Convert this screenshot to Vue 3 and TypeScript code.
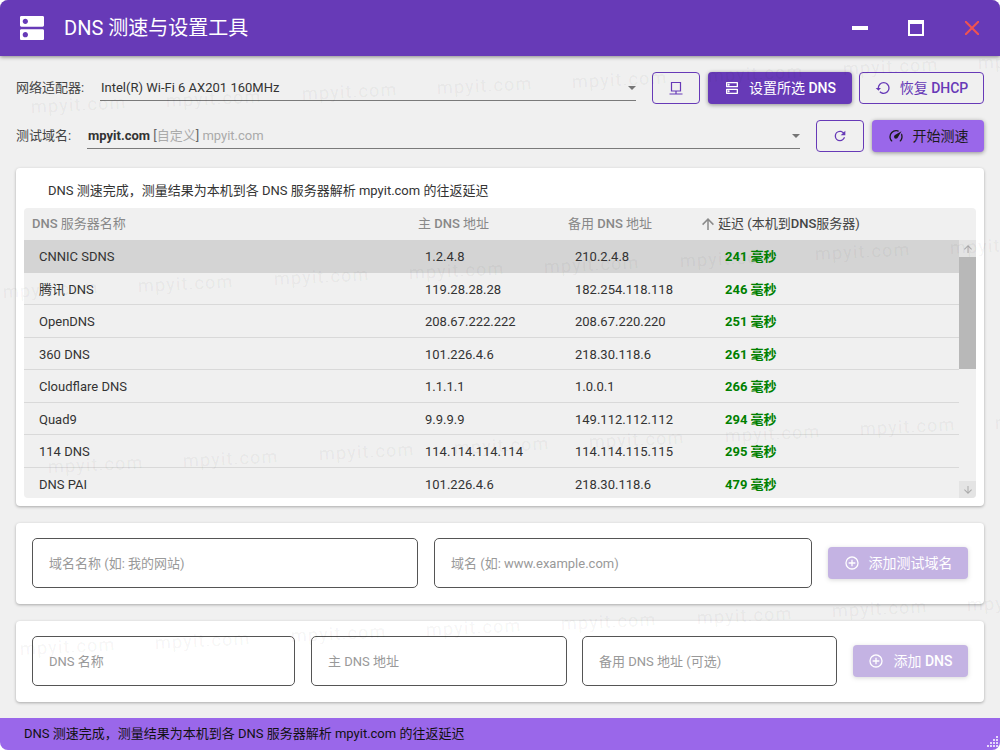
<script setup lang="ts">
type Server = {
    name: string,
    primary: string,
    backup: string,
    latency: number,
}

const servers: Server[] = [
    { name: 'CNNIC SDNS', primary: '1.2.4.8', backup: '210.2.4.8', latency: 241 },
    { name: '腾讯 DNS', primary: '119.28.28.28', backup: '182.254.118.118', latency: 246 },
    { name: 'OpenDNS', primary: '208.67.222.222', backup: '208.67.220.220', latency: 251 },
    { name: '360 DNS', primary: '101.226.4.6', backup: '218.30.118.6', latency: 261 },
    { name: 'Cloudflare DNS', primary: '1.1.1.1', backup: '1.0.0.1', latency: 266 },
    { name: 'Quad9', primary: '9.9.9.9', backup: '149.112.112.112', latency: 294 },
    { name: '114 DNS', primary: '114.114.114.114', backup: '114.114.115.115', latency: 295 },
    { name: 'DNS PAI', primary: '101.226.4.6', backup: '218.30.118.6', latency: 479 },
]

const message = 'DNS 测速完成，测量结果为本机到各 DNS 服务器解析 mpyit.com 的往返延迟'

// watermark text repeats in slanted rows across the whole window
const watermarks: { x: number, y: number }[] = []
for (const [startX, startY] of [[31, 107], [3, 292], [48, 467], [20, 649]]) {
    for (let i = 0; i < 8; i++) {
        watermarks.push({ x: startX + i * 135.3, y: startY - i * 6.3 })
    }
}
</script>

<template>
    <div class="window">
        <header class="titlebar">
            <svg class="logo" viewBox="0 0 24 24"><path d="M20 13H4c-.55 0-1 .45-1 1v6c0 .55.45 1 1 1h16c.55 0 1-.45 1-1v-6c0-.55-.45-1-1-1zM7 19c-1.1 0-2-.9-2-2s.9-2 2-2 2 .9 2 2-.9 2-2 2zM20 3H4c-.55 0-1 .45-1 1v6c0 .55.45 1 1 1h16c.55 0 1-.45 1-1V4c0-.55-.45-1-1-1zM7 9c-1.1 0-2-.9-2-2s.9-2 2-2 2 .9 2 2-.9 2-2 2z" /></svg>
            <h1>DNS 测速与设置工具</h1>
            <div class="controls">
                <svg viewBox="0 0 24 24"><path d="M20,14H4V10H20" /></svg>
                <svg viewBox="0 0 24 24"><path d="M4,4H20V20H4V4M6,8V18H18V8H6Z" /></svg>
                <svg class="close" viewBox="0 0 24 24"><path d="M13.46,12L19,17.54V19H17.54L12,13.46L6.46,19H5V17.54L10.54,12L5,6.46V5H6.46L12,10.54L17.54,5H19V6.46L13.46,12Z" /></svg>
            </div>
        </header>

        <main class="content">
            <div class="toolbar">
                <label class="adapter_label">网络适配器:</label>
                <div class="combo">
                    <span>Intel(R) Wi-Fi 6 AX201 160MHz</span>
                    <i class="caret"></i>
                </div>
                <button class="btn outline icon_only">
                    <svg viewBox="0 0 16 16" class="lan">
                        <path d="M3.5 2.5h9v8.5h-9zM8 11v3M1.5 14h13" />
                    </svg>
                </button>
                <button class="btn primary w_set">
                    <svg viewBox="0 0 24 24"><path d="M20 13H4c-.55 0-1 .45-1 1v6c0 .55.45 1 1 1h16c.55 0 1-.45 1-1v-6c0-.55-.45-1-1-1zm-1 6H5v-4h14v4zm-12-.5c.83 0 1.5-.67 1.5-1.5s-.67-1.5-1.5-1.5-1.5.67-1.5 1.5.67 1.5 1.5 1.5zM20 3H4c-.55 0-1 .45-1 1v6c0 .55.45 1 1 1h16c.55 0 1-.45 1-1V4c0-.55-.45-1-1-1zm-1 6H5V5h14v4zM7 8.5c.83 0 1.5-.67 1.5-1.5S7.83 5.5 7 5.5 5.5 6.17 5.5 7 6.17 8.5 7 8.5z" /></svg>
                    <span>设置所选 <b>DNS</b></span>
                </button>
                <button class="btn outline w_restore">
                    <svg viewBox="0 0 24 24"><path d="M13,3A9,9 0 0,0 4,12H1L4.89,15.89L4.96,16.03L9,12H6A7,7 0 0,1 13,5A7,7 0 0,1 20,12A7,7 0 0,1 13,19C11.07,19 9.32,18.21 8.06,16.94L6.64,18.36C8.27,20 10.5,21 13,21A9,9 0 0,0 22,12A9,9 0 0,0 13,3Z" /></svg>
                    <span>恢复 <b>DHCP</b></span>
                </button>
            </div>

            <div class="toolbar second">
                <label class="domain_label">测试域名:</label>
                <div class="combo">
                    <span><b>mpyit.com</b> <em>[</em><s>自定义</s><em>]</em> <s>mpyit.com</s></span>
                    <i class="caret"></i>
                </div>
                <button class="btn outline icon_only">
                    <svg viewBox="0 0 24 24"><path d="M17.65,6.35C16.2,4.9 14.21,4 12,4A8,8 0 0,0 4,12A8,8 0 0,0 12,20C15.73,20 18.84,17.45 19.73,14H17.65C16.83,16.33 14.61,18 12,18A6,6 0 0,1 6,12A6,6 0 0,1 12,6C13.66,6 15.14,6.69 16.22,7.78L13,11H20V4L17.65,6.35Z" /></svg>
                </button>
                <button class="btn accent w_start">
                    <svg viewBox="0 0 24 24"><path d="M12,16A3,3 0 0,1 9,13C9,11.88 9.61,10.9 10.5,10.39L20.21,4.77L14.68,14.35C14.18,15.33 13.17,16 12,16M12,3C13.81,3 15.5,3.5 16.97,4.32L14.87,5.53C14,5.19 13,5 12,5A8,8 0 0,0 4,13C4,15.21 4.89,17.21 6.34,18.65H6.35C6.74,19.04 6.74,19.67 6.35,20.06C5.96,20.45 5.32,20.45 4.93,20.07V20.07C3.12,18.26 2,15.76 2,13A10,10 0 0,1 12,3M22,13C22,15.76 20.88,18.26 19.07,20.07V20.07C18.68,20.45 18.05,20.45 17.66,20.06C17.27,19.67 17.27,19.04 17.66,18.65V18.65C19.11,17.2 20,15.21 20,13C20,12 19.81,11 19.46,10.1L20.67,8C21.5,9.5 22,11.19 22,13Z" /></svg>
                    <span>开始测速</span>
                </button>
            </div>

            <section class="card results">
                <p class="summary">{{ message }}</p>
                <div class="grid">
                    <div class="grid_head">
                        <span class="col_name"><b>DNS</b> 服务器名称</span>
                        <span class="col_primary">主 <b>DNS</b> 地址</span>
                        <span class="col_backup">备用 <b>DNS</b> 地址</span>
                        <span class="col_latency">
                            <svg viewBox="0 0 24 24"><path d="M13,20H11V8L5.5,13.5L4.08,12.08L12,4.16L19.92,12.08L18.5,13.5L13,8V20Z" /></svg>
                            <span>延迟 (本机到<b>DNS</b>服务器)</span>
                        </span>
                    </div>
                    <div class="grid_body">
                        <div class="rows">
                            <div v-for="(server, index) in servers" :key="server.name" class="row" :class="{ selected: index === 0 }">
                                <span class="col_name">{{ server.name }}</span>
                                <span class="col_primary">{{ server.primary }}</span>
                                <span class="col_backup">{{ server.backup }}</span>
                                <span class="col_latency latency">{{ server.latency }} 毫秒</span>
                            </div>
                        </div>
                        <div class="scrollbar">
                            <div class="scroll_btn">
                                <svg viewBox="0 0 24 24"><path d="M13,20H11V8L5.5,13.5L4.08,12.08L12,4.16L19.92,12.08L18.5,13.5L13,8V20Z" /></svg>
                            </div>
                            <div class="thumb"></div>
                            <div class="track"></div>
                            <div class="scroll_btn">
                                <svg viewBox="0 0 24 24"><path d="M11,4H13V16L18.5,10.5L19.92,11.92L12,19.84L4.08,11.92L5.5,10.5L11,16V4Z" /></svg>
                            </div>
                        </div>
                    </div>
                </div>
            </section>

            <section class="card form">
                <input class="field f_domain_name" placeholder="域名名称 (如: 我的网站)" />
                <input class="field f_domain" placeholder="域名 (如: www.example.com)" />
                <button class="btn primary disabled w_add_domain">
                    <svg viewBox="0 0 24 24"><path d="M12,20C7.59,20 4,16.41 4,12C4,7.59 7.59,4 12,4C16.41,4 20,7.59 20,12C20,16.41 16.41,20 12,20M12,2A10,10 0 0,0 2,12A10,10 0 0,0 12,22A10,10 0 0,0 22,12A10,10 0 0,0 12,2M13,7H11V11H7V13H11V17H13V13H17V11H13V7Z" /></svg>
                    <span>添加测试域名</span>
                </button>
            </section>

            <section class="card form">
                <input class="field f_dns_name" placeholder="DNS 名称" />
                <input class="field f_dns_primary" placeholder="主 DNS 地址" />
                <input class="field f_dns_backup" placeholder="备用 DNS 地址 (可选)" />
                <button class="btn primary disabled w_add_dns">
                    <svg viewBox="0 0 24 24"><path d="M12,20C7.59,20 4,16.41 4,12C4,7.59 7.59,4 12,4C16.41,4 20,7.59 20,12C20,16.41 16.41,20 12,20M12,2A10,10 0 0,0 2,12A10,10 0 0,0 12,22A10,10 0 0,0 22,12A10,10 0 0,0 12,2M13,7H11V11H7V13H11V17H13V13H17V11H13V7Z" /></svg>
                    <span>添加 <b>DNS</b></span>
                </button>
            </section>
        </main>

        <footer class="status">
            <span>{{ message }}</span>
            <svg class="grip" viewBox="0 0 12 12">
                <path d="M10 0h2v2h-2zM7 3h2v2H7zM10 3h2v2h-2zM4 6h2v2H4zM7 6h2v2H7zM10 6h2v2h-2zM1 9h2v2H1zM4 9h2v2H4zM7 9h2v2H7zM10 9h2v2h-2z" />
            </svg>
        </footer>

        <div class="watermarks">
            <span v-for="(mark, index) in watermarks" :key="index" :style="{ left: mark.x + 'px', top: mark.y + 'px' }">mpyit.com</span>
        </div>
    </div>
</template>

<style>
html, body {
    background: #fff;
}
</style>

<style scoped>
.window {
    position: relative;
    width: 1000px;
    height: 750px;
    overflow: hidden;
    display: flex;
    flex-direction: column;
    border-radius: 8px;
    background: #f0f0f0;
    color: #333;
    font-family: Roboto, "Noto Sans CJK SC", sans-serif;
    font-size: 13px;
    line-height: 16px;
}

.titlebar {
    position: relative;
    z-index: 1;
    flex: none;
    height: 56px;
    display: flex;
    align-items: center;
    padding: 0 16px;
    background: #673ab7;
    color: #fff;
    box-shadow: 0 1px 4px rgba(0, 0, 0, 0.45);
}

.logo {
    width: 32px;
    height: 32px;
    fill: #fff;
}

h1 {
    margin: 0 0 0 16px;
    font-size: 20px;
    line-height: 24px;
    font-weight: 400;
}

.controls {
    margin-left: auto;
    display: flex;
    gap: 32px;
}

.controls svg {
    width: 24px;
    height: 24px;
    fill: #fff;
}

.controls .close {
    fill: #ef5350;
}

.content {
    flex: 1;
    display: flex;
    flex-direction: column;
    padding: 16px 16px 0;
}

.toolbar {
    height: 32px;
    display: flex;
    align-items: stretch;
}

.second {
    margin-top: 16px;
}

label {
    align-self: center;
    color: #444;
}

.adapter_label {
    width: 84px;
}

.domain_label {
    width: 71px;
}

.combo {
    position: relative;
    flex: 1;
    margin-right: 16px;
    margin-bottom: 3px;
    display: flex;
    align-items: center;
    padding-left: 1px;
    padding-top: 4px;
    border-bottom: 1px solid #7a7a7a;
    box-sizing: border-box;
}

.combo b {
    font-weight: 700;
}

.combo em {
    font-style: normal;
    color: #666;
}

.combo s {
    text-decoration: none;
    color: #aaa;
}

.caret {
    position: absolute;
    right: 0;
    top: 14px;
    border-left: 4px solid transparent;
    border-right: 4px solid transparent;
    border-top: 4px solid #757575;
}

.btn {
    flex: none;
    display: inline-flex;
    align-items: center;
    justify-content: center;
    gap: 9px;
    box-sizing: border-box;
    height: 32px;
    padding: 0;
    border: none;
    border-radius: 4px;
    font-family: inherit;
    font-size: 14px;
    line-height: 16px;
    font-weight: 400;
}

.btn b {
    font-weight: 500;
}

.btn svg {
    width: 16px;
    height: 16px;
    fill: currentColor;
}

.btn.outline {
    border: 1px solid #673ab7;
    background: transparent;
    color: #673ab7;
}

.btn.primary {
    background: #673ab7;
    color: #fff;
    box-shadow: 0 1px 4px rgba(0, 0, 0, 0.4);
}

.btn.accent {
    background: #9a67ea;
    color: #1c1c1c;
    box-shadow: 0 1px 4px rgba(0, 0, 0, 0.4);
}

.btn.disabled {
    opacity: 0.38;
}

.icon_only {
    width: 48px;
}

.btn .lan {
    fill: none;
    stroke: currentColor;
    stroke-width: 1.2;
}

.w_set {
    width: 144px;
    margin-left: 8px;
}

.w_restore {
    width: 125px;
    margin-left: 7px;
}

.w_start {
    width: 112px;
    margin-left: 8px;
}

.card {
    background: #fff;
    border-radius: 4px;
    box-shadow: 0 1px 3px rgba(0, 0, 0, 0.3);
}

.results {
    height: 338px;
    margin-top: 16px;
    box-sizing: border-box;
    padding: 0 8px 8px;
    display: flex;
    flex-direction: column;
}

.summary {
    flex: none;
    height: 40px;
    margin: 0;
    padding: 6px 0 0 24px;
    box-sizing: border-box;
    line-height: 34px;
}

.grid {
    flex: 1;
    min-height: 0;
    display: flex;
    flex-direction: column;
    background: #f0f0f0;
    border-radius: 4px;
    overflow: hidden;
}

.grid_head {
    flex: none;
    height: 32px;
    display: flex;
    align-items: center;
    padding-left: 8px;
    color: #888;
}

.grid_head b {
    font-weight: 500;
}

.grid_head .col_name {
    width: 386px;
}

.grid_head .col_primary {
    width: 150px;
}

.grid_head .col_backup {
    width: 131px;
}

.grid_head .col_latency {
    display: flex;
    align-items: center;
    gap: 1px;
    color: #444;
}

.grid_head svg {
    width: 18px;
    height: 18px;
    fill: #8a8a8a;
}

.grid_body {
    flex: 1;
    min-height: 0;
    display: flex;
}

.rows {
    flex: 1;
    overflow: hidden;
}

.row {
    height: 32.5px;
    box-sizing: border-box;
    display: flex;
    align-items: center;
    padding-left: 15px;
    padding-top: 3px;
    border-bottom: 1px solid #d9d9d9;
}

.row.selected {
    background: #d4d4d4;
    border-bottom-color: transparent;
}

.row .col_name {
    width: 386px;
}

.row .col_primary,
.row .col_backup {
    width: 150px;
}

.latency {
    color: #008000;
    font-weight: 700;
}

.scrollbar {
    flex: none;
    width: 17px;
    display: flex;
    flex-direction: column;
}

.scroll_btn {
    flex: none;
    height: 17px;
    display: flex;
    align-items: center;
    justify-content: center;
    background: #e4e4e4;
}

.scroll_btn svg {
    width: 12px;
    height: 12px;
    fill: #aaa;
}

.thumb {
    flex: none;
    height: 112px;
    background: #b8b8b8;
}

.track {
    flex: 1;
}

.form {
    height: 81px;
    margin-top: 17px;
    box-sizing: border-box;
    padding: 15px 16px 16px;
    display: flex;
    align-items: flex-start;
}

.field {
    box-sizing: border-box;
    height: 50px;
    min-width: 0;
    padding: 0 16px;
    border: 1px solid #555;
    border-radius: 5px;
    background: transparent;
    outline: none;
    font-family: inherit;
    font-size: 13px;
    color: #333;
}

.field::placeholder {
    color: #999;
    opacity: 1;
}

.f_domain_name {
    width: 386px;
}

.f_domain {
    width: 378px;
    margin-left: 16px;
}

.f_dns_name {
    width: 263px;
}

.f_dns_primary {
    width: 256px;
    margin-left: 16px;
}

.f_dns_backup {
    width: 255px;
    margin-left: 15px;
}

.form .btn {
    margin-top: 9px;
    margin-left: 16px;
}

.w_add_domain {
    width: 140px;
}

.w_add_dns {
    width: 115px;
}

.status {
    position: relative;
    flex: none;
    height: 32px;
    display: flex;
    align-items: center;
    padding-left: 24px;
    background: #9a67ea;
    color: #111;
}

.grip {
    position: absolute;
    right: 2px;
    bottom: 2px;
    width: 12px;
    height: 12px;
    fill: rgba(255, 255, 255, 0.75);
}

.watermarks {
    position: absolute;
    inset: 0;
    pointer-events: none;
    overflow: hidden;
}

.watermarks span {
    position: absolute;
    transform: translateY(-50%) rotate(-2.8deg);
    transform-origin: left center;
    font-size: 18px;
    letter-spacing: 1.2px;
    color: rgba(0, 0, 0, 0.055);
    white-space: nowrap;
}
</style>
